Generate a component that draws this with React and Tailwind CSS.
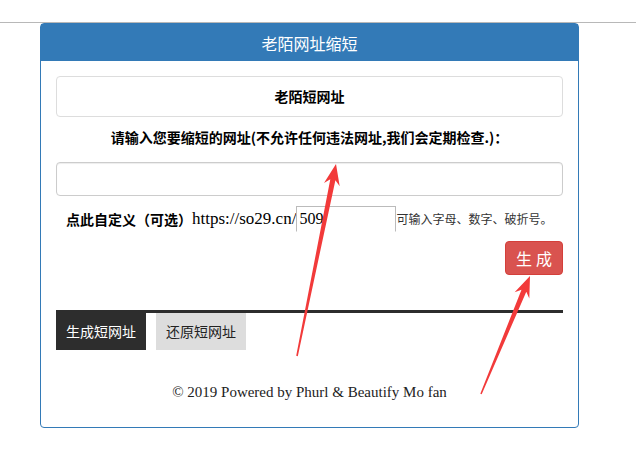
import React from "react";

const cjk = { fontFamily: '"Noto Sans CJK SC", "Noto Sans", sans-serif' };
const serif = { fontFamily: '"Liberation Serif", "Noto Sans CJK SC", serif' };

// red annotation arrow, tail -> tip
function arrowPoints(tail, tip) {
  const dx = tip[0] - tail[0];
  const dy = tip[1] - tail[1];
  const len = Math.hypot(dx, dy);
  const ux = dx / len;
  const uy = dy / len;
  const nx = -uy;
  const ny = ux;
  const at = (d, w) => [tip[0] - ux * d + nx * w, tip[1] - uy * d + ny * w];
  const pts = [
    at(len, -0.8),
    at(16, -2.6),
    at(21, -8),
    [tip[0], tip[1]],
    at(21, 8),
    at(16, 2.6),
    at(len, 0.8),
  ];
  return pts.map((p) => p.map((v) => v.toFixed(1)).join(",")).join(" ");
}

const App = () => {
  return (
    <div className="relative w-[636px] h-[460px] bg-white text-[#333]" style={cjk}>
      <div className="h-[23px] border-b border-[#b8b8b8]"></div>

      <div className="ml-[40px] w-[539px] border border-[#337ab7] rounded-[4px]">
        {/* header */}
        <div className="h-[37px] bg-[#337ab7] flex items-center justify-center text-white text-[16px]">
          老陌网址缩短
        </div>

        <div className="px-[15px] pt-[15px] pb-[25px]">
          <div className="h-[41px] border border-[#ddd] rounded-[4px] flex items-center justify-center text-[14px] font-bold text-black">
            老陌短网址
          </div>

          <p className="mt-[10px] h-[20px] leading-[20px] text-center text-[14px] font-bold text-black">
            请输入您要缩短的网址(不允许任何违法网址,我们会定期检查.)：
          </p>

          <input
            type="text"
            className="mt-[15px] block w-full h-[34px] border border-[#ccc] rounded-[4px] shadow-[inset_0_1px_1px_rgba(0,0,0,0.075)] px-3 outline-none"
          />

          <div className="mt-[10px] h-[26px] flex items-center pl-[10px]">
            <span className="text-[14px] font-bold text-black">点此自定义（可选）</span>
            <span className="text-[17px] text-black" style={serif}>https://so29.cn/</span>
            <input
              type="text"
              defaultValue="509"
              className="w-[100px] h-[26px] border border-[#bbb] border-b-white px-[2px] text-[16px] text-black outline-none"
              style={serif}
            />
            <span className="text-[12px] text-[#333]">可输入字母、数字、破折号。</span>
          </div>

          <div className="mt-[9px] flex justify-end">
            <button className="w-[58px] h-[34px] bg-[#d9534f] border border-[#d43f3a] rounded-[4px] text-white text-[16px] tracking-[4px] pl-[4px]">
              生成
            </button>
          </div>

          <div className="mt-[35px] h-[3px] bg-[#2d2d2d]"></div>

          <div className="flex gap-[10px]">
            <div className="w-[90px] h-[37px] bg-[#2d2d2d] text-white text-[14px] flex items-center justify-center">
              生成短网址
            </div>
            <div className="w-[90px] h-[37px] bg-[#ddd] text-[#222] text-[14px] flex items-center justify-center">
              还原短网址
            </div>
          </div>

          <p className="mt-[32px] h-[20px] leading-[20px] text-center text-[15px] text-[#222]" style={serif}>
            © 2019 Powered by Phurl &amp; Beautify Mo fan
          </p>
        </div>
      </div>

      {/* annotation arrows */}
      <svg className="absolute inset-0 pointer-events-none" width="636" height="460" viewBox="0 0 636 460">
        <polygon points={arrowPoints([297, 356], [336, 164])} fill="#f23a3a" />
        <polygon points={arrowPoints([481, 394], [530, 276])} fill="#f23a3a" />
      </svg>
    </div>
  );
};

export default App;
